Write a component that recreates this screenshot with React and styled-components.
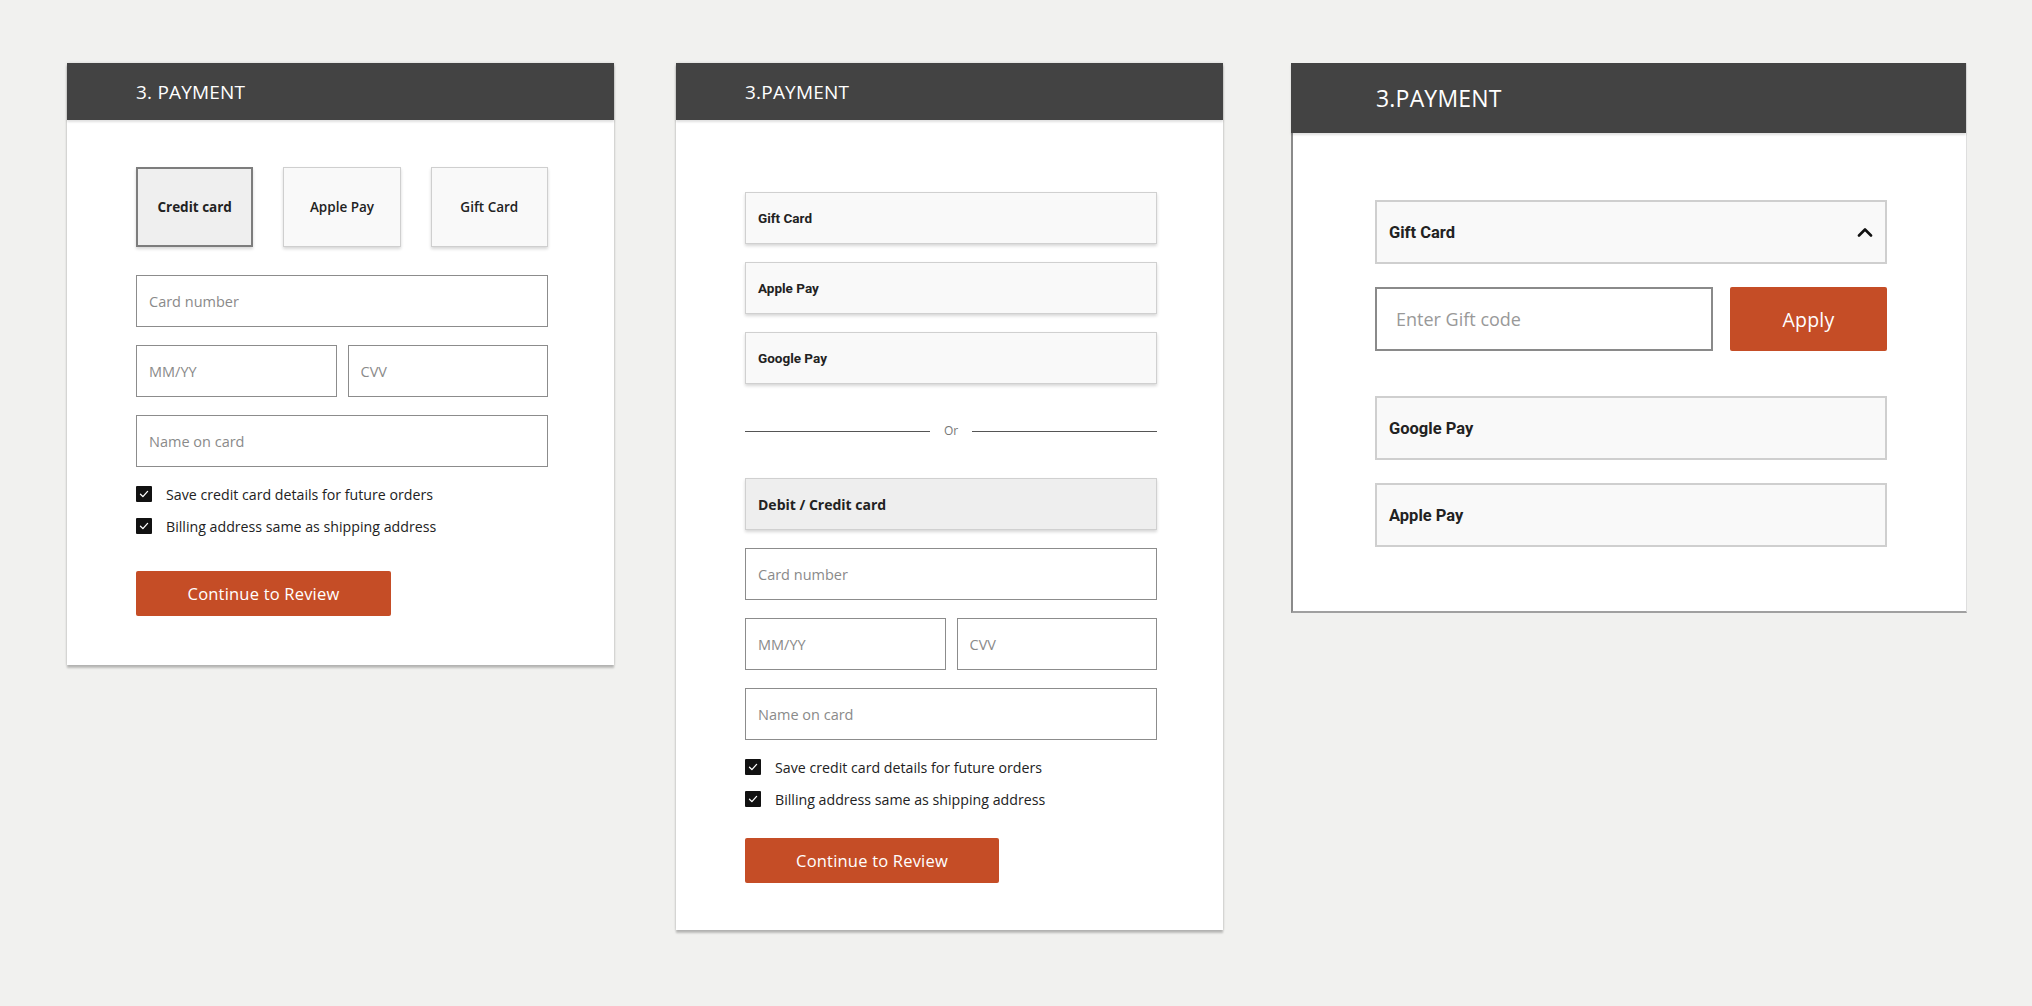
import React from "react";
import styled, { createGlobalStyle } from "styled-components";

const SANS = '"Open Sans", "Lato", sans-serif';
const ROBOTO = '"Roboto", "Open Sans", sans-serif';

const GlobalStyle = createGlobalStyle`
  html, body {
    margin: 0;
    padding: 0;
    background: #f1f1ef;
  }
  body {
    font-family: ${SANS};
    color: #222;
  }
  * { box-sizing: border-box; }
`;

const Page = styled.div`
  display: flex;
  align-items: flex-start;
  padding: 63px 0 40px 67px;
  min-height: 1006px;
`;

const Panel = styled.section`
  width: ${(p) => p.$width}px;
  margin-left: ${(p) => p.$offset || 0}px;
  background: #fff;
  box-shadow: ${(p) =>
    p.$outlined
      ? "none"
      : "0 3px 2px rgba(0,0,0,0.22), 0 0 3px rgba(0,0,0,0.12)"};
  border-left: ${(p) => (p.$outlined ? "2px solid #8a8a8a" : "none")};
  border-bottom: ${(p) => (p.$outlined ? "2px solid #a0a0a0" : "none")};
  border-right: ${(p) => (p.$outlined ? "1px solid #dedede" : "none")};
`;

const Header = styled.header`
  height: ${(p) => p.$height}px;
  background: #434343;
  color: #fff;
  display: flex;
  align-items: center;
  padding-left: ${(p) => p.$indent}px;
  font-family: ${SANS};
  font-size: ${(p) => p.$size}px;
  font-weight: 500;
  letter-spacing: 0.2px;
  box-shadow: 0 2px 2px rgba(0, 0, 0, 0.12);
  margin-left: ${(p) => (p.$outlined ? "-2px" : "0")};
`;

const Body = styled.div`
  display: flex;
  flex-direction: column;
  padding: ${(p) => p.$pad};
`;

/* ---------- payment method tiles ---------- */

const TileRow = styled.div`
  display: grid;
  grid-template-columns: repeat(3, 1fr);
  gap: 30px;
`;

const Tile = styled.button`
  height: 80px;
  background: ${(p) => (p.$active ? "#efefef" : "#f9f9f9")};
  border: ${(p) => (p.$active ? "2px solid #7d7d7d" : "1px solid #cfcfcf")};
  box-shadow: 0 2px 3px rgba(0, 0, 0, 0.16);
  font-family: ${SANS};
  font-size: 13.5px;
  font-weight: ${(p) => (p.$active ? 700 : 600)};
  color: #222;
  padding: 0;
`;

/* ---------- text fields ---------- */

const Fields = styled.div`
  display: flex;
  flex-direction: column;
  gap: 18px;
  margin-top: ${(p) => p.$top || 0}px;
`;

const FieldPair = styled.div`
  display: grid;
  grid-template-columns: 1fr 1fr;
  gap: 11px;
`;

const Field = styled.input`
  display: block;
  width: 100%;
  height: ${(p) => p.$height || 52}px;
  border: ${(p) => p.$border || "1px solid #8c8c8c"};
  background: #fff;
  padding: 0 0 0 ${(p) => p.$indent || 12}px;
  font-family: ${SANS};
  font-size: ${(p) => p.$size || 14.5}px;
  color: #333;
  outline: none;
  &::placeholder {
    color: ${(p) => p.$hint || "#8a8a8a"};
  }
`;

/* ---------- checkboxes ---------- */

const Checks = styled.div`
  display: flex;
  flex-direction: column;
  gap: 16px;
  margin-top: 19px;
`;

const CheckRow = styled.label`
  display: flex;
  align-items: center;
  gap: 14px;
  font-family: ${SANS};
  font-size: 14.2px;
  color: #222;
  height: 16px;
`;

const Box = styled.span`
  width: 16px;
  height: 16px;
  background: #111;
  border-radius: 1px;
  display: inline-flex;
  align-items: center;
  justify-content: center;
  flex: none;
`;

const Check = ({ children }) => (
  <CheckRow>
    <Box>
      <svg width="10" height="10" viewBox="0 0 10 10">
        <polyline
          points="1.5,5.3 3.9,7.6 8.6,2.4"
          fill="none"
          stroke="#fff"
          strokeWidth="1.3"
          strokeLinecap="round"
          strokeLinejoin="round"
        />
      </svg>
    </Box>
    {children}
  </CheckRow>
);

/* ---------- buttons ---------- */

const PrimaryButton = styled.button`
  width: ${(p) => p.$width}px;
  height: ${(p) => p.$height}px;
  margin-top: ${(p) => p.$top || 0}px;
  background: #c54d26;
  border: none;
  border-radius: 2px;
  color: #fff;
  font-family: ${SANS};
  font-size: ${(p) => p.$size}px;
  font-weight: 500;
  letter-spacing: 0.2px;
  padding: 0;
`;

/* ---------- option rows ---------- */

const Options = styled.div`
  display: flex;
  flex-direction: column;
  gap: ${(p) => p.$gap}px;
  margin-top: ${(p) => p.$top || 0}px;
`;

const OptionRow = styled.div`
  height: ${(p) => p.$height}px;
  display: flex;
  align-items: center;
  justify-content: space-between;
  padding: 0 ${(p) => p.$indent}px;
  background: ${(p) => (p.$active ? "#eeeeee" : "#f9f9f9")};
  border: ${(p) => p.$border || "1px solid #d0d0d0"};
  box-shadow: ${(p) => (p.$flat ? "none" : "0 2px 3px rgba(0,0,0,0.16)")};
  font-family: ${(p) => (p.$plain ? SANS : ROBOTO)};
  font-size: ${(p) => p.$size}px;
  font-weight: 700;
  color: #222;
`;

const Divider = styled.div`
  display: flex;
  align-items: center;
  gap: 14px;
  height: 14px;
  line-height: 14px;
  margin: 40px 0 40px;
  font-family: ${SANS};
  font-size: 12px;
  color: #777;
  &::before,
  &::after {
    content: "";
    flex: 1;
    height: 1px;
    background: #555;
  }
`;

const CodeRow = styled.div`
  display: grid;
  grid-template-columns: 1fr 157px;
  gap: 17px;
  margin: 23px 0 45px;
`;

const Chevron = () => (
  <svg width="16" height="10" viewBox="0 0 16 10">
    <polyline
      points="2,8.5 8,2.5 14,8.5"
      fill="none"
      stroke="#111"
      strokeWidth="2.6"
      strokeLinecap="round"
      strokeLinejoin="round"
    />
  </svg>
);

const CardFields = ({ top }) => (
  <Fields $top={top}>
    <Field placeholder="Card number" />
    <FieldPair>
      <Field placeholder="MM/YY" />
      <Field placeholder="CVV" />
    </FieldPair>
    <Field placeholder="Name on card" />
  </Fields>
);

const Consents = () => (
  <Checks>
    <Check>Save credit card details for future orders</Check>
    <Check>Billing address same as shipping address</Check>
  </Checks>
);

export default function App() {
  return (
    <>
      <GlobalStyle />
      <Page>
        {/* tiles layout */}
        <Panel $width={547}>
          <Header $height={57} $indent={69} $size={19}>
            3. PAYMENT
          </Header>
          <Body $pad="47px 66px 49px 69px">
            <TileRow>
              <Tile $active>Credit card</Tile>
              <Tile>Apple Pay</Tile>
              <Tile>Gift Card</Tile>
            </TileRow>
            <CardFields top={28} />
            <Consents />
            <PrimaryButton $width={255} $height={45} $size={16.5} $top={37}>
              Continue to Review
            </PrimaryButton>
          </Body>
        </Panel>

        {/* stacked list layout */}
        <Panel $width={547} $offset={62}>
          <Header $height={57} $indent={69} $size={19}>
            3.PAYMENT
          </Header>
          <Body $pad="72px 66px 47px 69px">
            <Options $gap={18}>
              <OptionRow $height={52} $indent={12} $size={13.5}>
                Gift Card
              </OptionRow>
              <OptionRow $height={52} $indent={12} $size={13.5}>
                Apple Pay
              </OptionRow>
              <OptionRow $height={52} $indent={12} $size={13.5}>
                Google Pay
              </OptionRow>
            </Options>
            <Divider>Or</Divider>
            <OptionRow $height={52} $indent={12} $size={14} $active $plain>
              Debit / Credit card
            </OptionRow>
            <CardFields top={18} />
            <Consents />
            <PrimaryButton $width={254} $height={45} $size={16.5} $top={31}>
              Continue to Review
            </PrimaryButton>
          </Body>
        </Panel>

        {/* gift card expanded */}
        <Panel $width={676} $offset={68} $outlined>
          <Header $height={70} $indent={85} $size={23} $outlined>
            3.PAYMENT
          </Header>
          <Body $pad="67px 79px 64px 82px">
            <OptionRow
              $height={64}
              $indent={12}
              $size={16.5}
              $border="2px solid #cfcfcf"
              $flat
            >
              Gift Card
              <Chevron />
            </OptionRow>
            <CodeRow>
              <Field
                placeholder="Enter Gift code"
                $height={64}
                $indent={19}
                $size={18}
                $border="2px solid #8a8a8a"
                $hint="#999"
              />
              <PrimaryButton $width={157} $height={64} $size={19.5}>
                Apply
              </PrimaryButton>
            </CodeRow>
            <Options $gap={23}>
              <OptionRow
                $height={64}
                $indent={12}
                $size={16.5}
                $border="2px solid #cfcfcf"
                $flat
              >
                Google Pay
              </OptionRow>
              <OptionRow
                $height={64}
                $indent={12}
                $size={16.5}
                $border="2px solid #cfcfcf"
                $flat
              >
                Apple Pay
              </OptionRow>
            </Options>
          </Body>
        </Panel>
      </Page>
    </>
  );
}
